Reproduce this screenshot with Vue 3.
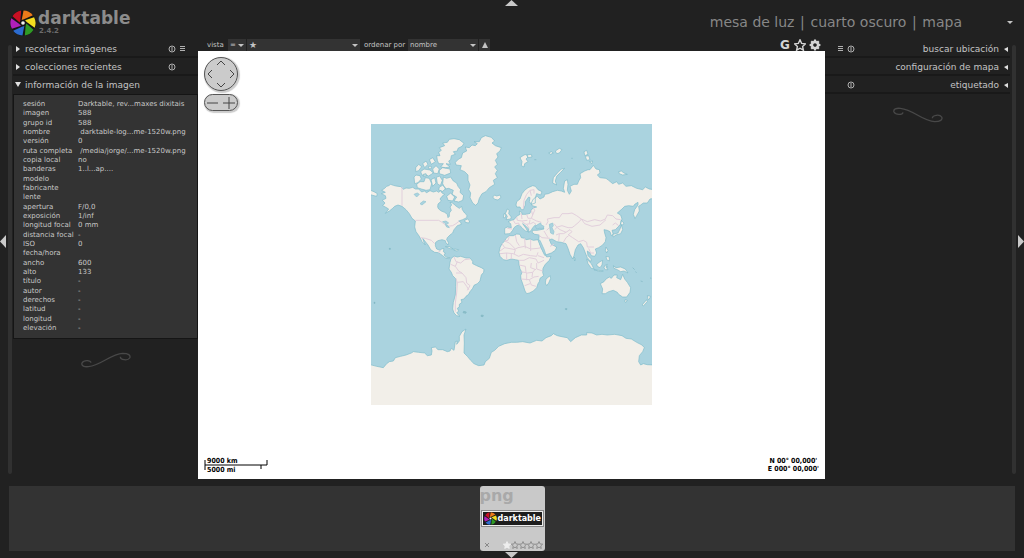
<script setup>
import { ref } from 'vue'

const wedges = ['#ee7a1a', '#f4de20', '#2f9a25', '#2c6cd0', '#b020ba', '#c81024']
const wedge = 'M-5 -12 2 -48A48 48 0 0 1 38 -30L4 -14Z'

const leftModules = [
  { title: 'recolectar imágenes', reset: true, presets: true, open: false },
  { title: 'colecciones recientes', reset: true, presets: false, open: false },
  { title: 'información de la imagen', reset: false, presets: false, open: true }
]
const rightModules = [
  { title: 'buscar ubicación', reset: true, presets: true },
  { title: 'configuración de mapa', reset: false, presets: false },
  { title: 'etiquetado', reset: true, presets: false }
]
const info = [
  ['sesión', 'Darktable, rev...maxes dixitais'],
  ['imagen', '588'],
  ['grupo id', '588'],
  ['nombre', '\u00a0darktable-log...me-1520w.png'],
  ['versión', '0'],
  ['ruta completa', '\u00a0/media/jorge/...me-1520w.png'],
  ['copia local', 'no'],
  ['banderas', '1..l...ap....'],
  ['modelo', ''],
  ['fabricante', ''],
  ['lente', ''],
  ['apertura', 'F/0,0'],
  ['exposición', '1/inf'],
  ['longitud focal', '0 mm'],
  ['distancia focal', '-'],
  ['ISO', '0'],
  ['fecha/hora', ''],
  ['ancho', '600'],
  ['alto', '133'],
  ['título', '-'],
  ['autor', '-'],
  ['derechos', '-'],
  ['latitud', '-'],
  ['longitud', '-'],
  ['elevación', '-']
]
const compare = ref('=')
const rating = ref('★')
const order = ref('nombre')

const star = 'M6 .8 7.6 4.4 11.5 4.8 8.6 7.4 9.4 11.2 6 9.2 2.6 11.2 3.4 7.4 .5 4.8 4.4 4.4Z'

const land = [
  // North America
  'M35 202 44 196 50 190 56 188 62 184 70 187 78 189 92 191 100 199 108 195 118 196 128 193 136 198 146 198 155 207 163 204 170 209 180 203 190 207 200 204 206 208 212 203 216 210 224 214 216 220 210 228 214 234 204 243 203 252 206 258 214 264 224 268 232 274 234 284 238 280 238 270 244 262 240 252 245 246 240 238 248 240 254 246 262 252 268 256 275 250 277 260 284 270 291 277 290 284 278 290 266 294 272 298 274 304 262 308 252 320 248 330 240 336 232 344 230 350 235 358 234 366 228 360 226 353 216 350 204 353 197 358 196 368 200 378 210 382 216 377 222 377 220 386 226 390 222 396 230 403 240 404 238 407 228 406 218 398 206 389 194 388 182 380 174 366 158 346 162 358 166 366 156 356 148 340 138 326 134 312 136 294 126 286 118 272 108 260 96 250 84 246 74 250 68 256 58 264 46 271 56 258 46 252 38 248 45 240 37 232 48 226 46 218 34 212 46 208Z',
  'M284 292 292 288 299 294 296 300 286 298Z',
  'M-3 200 12 206 22 212 20 220 12 218 -3 214Z',
  // Greenland
  'M256 118 266 108 274 104 278 90 290 84 286 72 298 74 306 66 316 68 322 62 312 56 328 56 334 44 346 38 364 43 374 54 366 60 376 68 394 74 390 84 380 92 384 102 376 112 382 124 374 132 382 142 376 152 382 164 370 172 374 184 358 194 348 206 336 212 328 226 324 240 317 247 308 240 300 224 302 210 296 200 300 186 294 172 294 156 284 146 270 140 274 128 258 126Z',
  'M368 222 374 216 380 219 390 216 393 223 384 231 374 229Z',
  // Arctic archipelago
  'M202 112 200 98 210 98 206 88 214 82 208 74 224 68 218 60 232 58 238 49 252 47 268 50 282 61 276 70 264 76 262 84 250 86 256 94 244 98 242 110 236 114 241 124 228 122 240 132 226 134 212 132 220 122 206 122Z',
  'M208 142 218 134 240 138 242 150 224 157 208 152Z',
  'M220 162 230 166 242 162 250 174 260 180 264 190 272 200 270 208 281 218 278 232 266 237 252 234 260 222 246 214 250 202 236 196 226 198 218 182Z',
  'M140 184 150 176 162 176 166 164 178 166 185 182 180 200 168 202 154 198 142 194Z',
  'M132 162 138 156 150 158 154 168 144 179 134 182Z',
  'M152 146 162 138 180 141 190 150 176 159 166 155 156 157Z',
  'M137 134 146 124 155 131 146 143 137 146Z',
  'M158 122 168 114 174 124 164 134Z',
  'M178 110 188 104 196 116 184 124Z',
  'M188 138 198 128 208 138 203 152 191 150Z',
  'M183 170 194 164 198 180 188 190Z',
  'M199 163 209 159 217 172 211 188 202 182Z',
  'M208 192 218 187 228 196 218 205 206 201Z',
  'M230 220 242 210 254 222 248 234 234 232Z',
  'M176 130 184 130 184 137 176 137Z M160 154 168 152 170 158 160 160Z',
  // Caribbean
  'M226 371 238 371 250 378 240 377Z',
  'M253 378 266 380 262 384 252 382Z',
  // South America
  'M240 418 243 407 252 399 262 402 272 400 288 405 300 405 308 415 308 422 320 428 334 434 342 439 341 448 334 456 330 474 322 482 312 487 308 496 300 506 296 514 288 520 282 528 273 530 276 538 268 544 268 552 262 556 266 564 260 570 270 580 260 578 252 570 248 558 250 538 256 516 257 490 258 468 248 458 244 448 237 438Z',
  // Africa
  'M387 388 390 374 396 362 404 354 408 346 418 338 430 338 440 333 450 334 454 344 464 346 468 350 480 348 490 352 504 350 508 360 514 374 521 386 530 402 543 400 538 412 526 424 519 436 518 448 521 458 510 466 508 476 504 482 500 494 490 504 478 510 470 512 465 504 460 488 453 468 452 458 456 448 450 438 447 424 446 412 436 410 424 408 410 412 400 410 390 400Z',
  'M540 458 542 466 536 480 530 488 526 480 528 468 536 462Z',
  // Eurasia
  'M404 333 404 316 412 312 424 314 422 302 414 296 424 292 432 290 440 280 450 274 448 264 455 268 456 274 468 274 480 271 484 260 492 254 500 252 486 248 484 240 490 228 502 220 510 228 522 222 524 214 535 212 548 206 562 202 574 204 584 208 580 196 584 174 592 170 594 184 592 202 598 214 604 204 600 190 612 184 622 184 626 174 632 164 630 152 644 144 654 140 660 140 670 127 678 138 688 140 690 150 682 156 690 164 708 166 716 172 728 182 740 176 746 184 758 180 768 190 784 188 800 196 818 200 826 192 838 198 852 200 852 226 840 228 832 240 820 240 812 246 806 250 808 264 800 278 795 287 790 274 794 260 804 246 804 238 794 244 790 250 776 248 764 250 756 258 742 270 752 276 756 288 750 306 736 320 726 322 730 334 724 338 720 326 712 322 702 320 704 330 708 344 706 356 698 366 686 374 676 378 680 390 674 400 664 398 660 390 652 384 654 398 664 408 662 416 652 404 646 390 640 374 632 362 624 366 616 380 612 398 608 408 600 394 594 376 588 362 574 358 560 356 546 348 538 350 544 364 560 372 556 382 544 390 524 397 518 384 510 364 506 350 508 336 494 334 486 328 488 322 502 322 522 318 516 308 506 312 496 306 488 314 484 322 476 328 476 318 464 306 458 302 468 316 474 326 466 324 456 314 448 306 440 308 432 314 428 322 420 332Z',
  // Scandinavia
  'M438 246 440 236 450 228 456 212 464 202 474 194 488 188 496 190 504 200 516 206 512 216 500 212 496 224 496 240 484 244 478 236 480 224 476 222 466 236 466 246 460 260 454 260 450 252 440 252Z',
  'M412 258 418 262 416 272 424 282 422 288 408 290 412 280 406 272Z',
  'M402 272 408 274 406 284 400 284Z',
  // Arctic islands of Eurasia
  'M548 180 550 164 562 150 574 138 584 136 572 148 560 160 556 174 560 186Z',
  'M450 104 462 96 470 94 474 102 468 108 474 116 464 122 462 132 454 128 456 116Z',
  'M470 96 484 94 486 102 474 104Z',
  'M642 86 650 82 654 94 644 98Z',
  'M646 100 656 98 660 110 650 112Z',
  'M658 116 668 114 666 122Z',
  'M746 146 754 144 762 150 772 154 758 156 748 152Z',
  'M536 90 544 86 550 90 542 94Z M556 84 568 76 576 80 568 90 560 92Z',
  // Japan, Philippines, Ceylon
  'M753 292 762 300 758 306 752 304Z',
  'M754 306 758 320 752 332 738 336 730 342 728 334 744 330 750 318Z',
  'M708 372 714 382 710 390 706 382Z M708 400 718 402 718 414 710 410Z',
  'M612 402 617 408 614 414Z',
  // Indonesia and New Guinea
  'M650 408 664 422 672 438 664 436 654 422Z',
  'M672 440 686 442 700 444 690 446Z',
  'M680 424 690 416 698 412 696 426 690 434 682 430Z',
  'M704 428 712 424 708 432 714 440 706 440 702 434Z',
  'M730 428 738 434 752 432 766 438 774 450 762 444 752 446 742 440 732 436Z',
  // Australia and New Zealand
  'M691 482 702 476 708 468 718 462 724 466 732 456 742 456 740 464 752 470 758 454 764 468 772 478 782 494 780 508 770 522 758 522 746 514 742 508 730 502 716 506 706 512 696 512 698 498Z',
  'M765 530 772 532 768 538 764 536Z',
  'M832 518 842 520 838 528 834 530Z M830 530 832 536 820 549 816 546Z',
  // Antarctica
  'M-3 724 20 730 40 734 50 722 58 716 70 714 76 704 92 700 108 696 124 690 130 686 146 688 164 690 172 698 184 696 186 684 184 674 196 672 204 680 218 680 232 686 240 684 244 676 252 682 256 656 262 654 260 664 268 654 268 640 276 626 288 618 282 636 283 660 282 690 292 700 302 712 312 722 326 728 342 726 346 716 358 706 364 688 374 682 386 670 404 662 424 658 440 658 458 656 480 660 500 652 516 654 528 644 544 638 550 632 562 638 580 642 592 644 602 656 616 644 634 636 650 636 650 629 666 630 680 636 696 634 712 636 734 634 756 638 768 646 784 648 800 658 816 666 823 674 818 686 808 698 806 716 812 726 820 722 832 725 852 726V852H-3Z'
].join(' ')

const water = [
  'M496 310 504 304 512 300 514 306 522 310 520 316 508 316 500 318Z',
  'M538 304 548 300 550 308 546 314 552 326 550 334 542 330 540 318Z',
  'M218 296 228 294 236 300 230 304Z M226 304 234 308 238 314 230 312Z',
  'M132 214 142 210 148 214 140 222Z M150 242 160 234 168 236 156 246Z',
  'M504 350 510 352 522 378 528 396 522 392 512 372Z'
].join(' ')

const borders = [
  'M96 192V248 M136 292H206L216 298 232 310 248 308 258 302 268 294',
  'M152 344 166 346 184 352 194 362 M204 388 212 384',
  'M258 466 262 480 260 510 256 540 256 566 M252 402 258 416 272 420 284 410 300 408 M262 416 256 430 266 444 276 450 288 464 290 480 300 488 292 502 M242 424 256 430 M262 478 280 476 290 490 296 500 M258 450 276 450',
  'M404 354 418 360 436 378 444 374 464 370 482 378 504 376 514 374 M418 340 414 352 404 354 M436 336 440 356 448 368 M464 346 466 376 M482 350V384 M396 362 404 374 390 384 M404 374 436 380 432 394 M410 390V410 M390 392 410 390 430 392 446 400 M424 392V408 M446 400 460 394 482 398 500 400 504 388 M446 412 462 412 478 404 498 408 504 420 522 412 M504 398 522 404 M500 420V438 M448 426 466 430 468 448 M454 446 472 450 488 448 496 438 M470 450V472 M454 468 478 470 492 462 506 460 M478 470 484 486 498 490 M488 448 486 462 M464 488 480 482 M500 438 518 444 M484 420 482 434 498 440',
  'M412 316 426 318 M430 292 436 302 446 300 448 308 M440 282 442 292 456 294 472 292 M454 272 456 288 M470 274 474 286 484 286 M456 296 468 304 482 302 490 298 498 304 M470 304 478 316 M484 262 488 276 484 286 500 294 514 298 M480 290 478 302 M488 276 494 262 490 254',
  'M528 306 534 296 532 288 552 284 568 284 576 272 594 272 606 270 620 278 634 288 628 296 614 308 606 314 594 314 576 308 562 312 554 320 M634 288 652 296 674 290 692 294 706 288 712 276 728 278 738 288 752 290 M634 288 644 302 666 310 690 306 708 290 M552 302 562 314 570 320 588 328 600 320 606 326 594 336 M558 336 568 332 580 332 588 328 M568 332 566 354 M538 314 530 322 M506 336 516 344 540 346 M596 336 608 344 626 356 640 352 650 358 652 372 660 372 672 372 M580 358 588 344 596 338 M540 370 552 364 M728 306 736 300 746 308 M522 324 534 344 M656 376 662 390 672 390',
  'M460 256 462 232 470 214 480 202 492 200 492 212 M480 202 484 218'
].join(' ')

const islets = 'M58 376h3v3h-3Z M12 538h3v3h-3Z M281 565l8 2-2 4-8-2Z M334 576l6 1-1 4-6-1Z M586 557l5 0-1 3-4-1Z M812 474l6 2 M840 465l4 1 M604 106h4 M493 110h6 M710 430l4 3 M788 434l6 6 M796 446l4 3'
</script>

<template>
  <div class="app">
    <header class="top">
      <svg class="logo" viewBox="-50 -50 100 100" aria-hidden="true">
        <circle r="49" fill="#151515" />
        <path v-for="(c, i) in wedges" :key="c" :fill="c" :transform="`rotate(${i * 60})`" :d="wedge" />
        <circle r="7" fill="#f2f2f2" />
      </svg>
      <div class="brand">
        <h1>darktable</h1>
        <span>2.4.2</span>
      </div>
      <nav class="views">
        <a href="#luz">mesa de luz</a><i>|</i><a href="#oscuro">cuarto oscuro</a><i>|</i><a href="#mapa">mapa</a>
      </nav>
      <button class="more" aria-label="más vistas">
        <svg viewBox="0 0 6 3"><path d="M0 0H6L3 3Z" /></svg>
      </button>
    </header>

    <main class="work">
      <aside class="side left">
        <div class="rail"></div>
        <div class="modules">
          <section v-for="m in leftModules" :key="m.title" class="module" :class="{ open: m.open }">
            <h2>
              <svg class="arrow" viewBox="0 0 6 6"><path :d="m.open ? 'M0 0H6L3 5Z' : 'M1 0 5 3 1 6Z'" /></svg>
              <span>{{ m.title }}</span>
              <button v-if="m.reset" aria-label="restablecer">
                <svg viewBox="0 0 8 8"><circle cx="4" cy="4" r="3" /><path d="M4 2V6" /></svg>
              </button>
              <button v-if="m.reset" aria-label="preajustes" :class="{ hidden: !m.presets }">
                <svg viewBox="0 0 8 8"><path d="M2 1.5H7M2 3.5H7M2 5.5H7" /></svg>
              </button>
            </h2>
          </section>
          <dl class="info">
            <div v-for="[k, v] in info" :key="k">
              <dt>{{ k }}</dt>
              <dd>{{ v }}</dd>
            </div>
          </dl>
          <svg class="flourish" viewBox="0 0 150 48">
            <path d="M30 32C28 23 8 24 3 33 0 42 10 45 22 44 62 40 88 6 125 4 142 4 150 10 146 18 140 27 118 24 118 14" />
          </svg>
        </div>
      </aside>

      <section class="center">
        <div class="toolbar">
          <label for="cmp">vista</label>
          <span class="pick cmp">
            <select id="cmp" v-model="compare"><option>=</option></select>
            <svg viewBox="0 0 6 3"><path d="M0 0H6L3 3Z" /></svg>
          </span>
          <span class="pick stars">
            <select v-model="rating" aria-label="valoración"><option>★</option></select>
            <svg viewBox="0 0 6 3"><path d="M0 0H6L3 3Z" /></svg>
          </span>
          <label for="ord" class="by">ordenar por</label>
          <span class="pick ord">
            <select id="ord" v-model="order"><option>nombre</option></select>
            <svg viewBox="0 0 6 3"><path d="M0 0H6L3 3Z" /></svg>
          </span>
          <button class="dir" aria-label="invertir orden">
            <svg viewBox="0 0 6 6"><path d="M3 0 6 6H0Z" /></svg>
          </button>
          <div class="tools">
            <button>G</button>
            <button aria-label="superposiciones">
              <svg viewBox="0 0 12 12"><path class="outline" :d="star" /></svg>
            </button>
            <button aria-label="preferencias">
              <svg viewBox="-6 -6 12 12">
                <circle r="3" class="ring" />
                <path v-for="n in 8" :key="n" :transform="`rotate(${n * 45})`" d="M-1.4 -3.5 -1 -5.4H1L1.4 -3.5Z" />
              </svg>
            </button>
          </div>
        </div>

        <div class="map">
          <svg class="world" viewBox="3 3 843 843" role="img" aria-label="mapa del mundo">
            <rect x="3" y="3" width="843" height="843" fill="#aad3df" />
            <path class="land" :d="land" />
            <path class="borders" :d="borders" />
            <path class="water" :d="water" />
            <path class="islets" :d="islets" />
          </svg>

          <div class="controls">
            <div class="pan">
              <button aria-label="norte"><svg viewBox="0 0 8 8"><path d="M0 6 4 2 8 6" /></svg></button>
              <div>
                <button aria-label="oeste"><svg viewBox="0 0 8 8"><path d="M6 0 2 4 6 8" /></svg></button>
                <button aria-label="este"><svg viewBox="0 0 8 8"><path d="M2 0 6 4 2 8" /></svg></button>
              </div>
              <button aria-label="sur"><svg viewBox="0 0 8 8"><path d="M0 2 4 6 8 2" /></svg></button>
            </div>
            <div class="zoom">
              <button aria-label="alejar"><svg viewBox="0 0 12 12"><path d="M0 6H11" /></svg></button>
              <button aria-label="acercar"><svg viewBox="0 0 12 12"><path d="M0 6H12M6 0V12" /></svg></button>
            </div>
          </div>

          <svg class="scale" viewBox="0 0 66 18">
            <path d="M1 3V13M1 8H63V3M57 8V12" />
            <text x="3" y="6">9000 km</text>
            <text x="3" y="15">5000 mi</text>
          </svg>
          <p class="coords">N 00° 00,000'<br />E 000° 00,000'</p>
        </div>
      </section>

      <aside class="side right">
        <div class="modules">
          <section v-for="m in rightModules" :key="m.title" class="module">
            <h2>
              <button v-if="m.reset" aria-label="preajustes" :class="{ hidden: !m.presets }">
                <svg viewBox="0 0 8 8"><path d="M1 1.5H6M1 3.5H6M1 5.5H6" /></svg>
              </button>
              <button v-if="m.reset" aria-label="restablecer">
                <svg viewBox="0 0 8 8"><circle cx="4" cy="4" r="3" /><path d="M4 2V6" /></svg>
              </button>
              <span>{{ m.title }}</span>
              <svg class="arrow" viewBox="0 0 6 6"><path d="M5 1 1 3 5 6Z" /></svg>
            </h2>
          </section>
          <svg class="flourish" viewBox="0 0 150 48">
            <path d="M30 16C28 25 8 24 3 15 0 6 10 3 22 4 62 8 88 42 125 44 142 44 150 38 146 30 140 21 118 24 118 34" />
          </svg>
        </div>
        <div class="rail"></div>
      </aside>
    </main>

    <footer class="film">
      <figure class="thumb">
        <b class="ext">png</b>
        <div class="pic">
          <svg viewBox="-50 -50 100 100" aria-hidden="true">
            <path v-for="(c, i) in wedges" :key="c" :fill="c" :transform="`rotate(${i * 60})`" :d="wedge" />
            <circle r="8" fill="#f2f2f2" />
          </svg>
          <b>darktable</b>
        </div>
        <figcaption>
          <svg class="reject" viewBox="0 0 6 6"><path d="M1 1 5 5M5 1 1 5" /></svg>
          <svg v-for="n in 5" :key="n" class="star" :class="{ on: n === 1 }" viewBox="0 0 12 12"><path :d="star" /></svg>
        </figcaption>
      </figure>
    </footer>

    <button class="edge north" aria-label="panel superior"><svg viewBox="0 0 13 6"><path d="M6.5 0 13 6H0Z" /></svg></button>
    <button class="edge south" aria-label="panel inferior"><svg viewBox="0 0 13 6"><path d="M0 0H13L6.5 6Z" /></svg></button>
    <button class="edge west" aria-label="panel izquierdo"><svg viewBox="0 0 6 13"><path d="M6 0V13L0 6.5Z" /></svg></button>
    <button class="edge east" aria-label="panel derecho"><svg viewBox="0 0 6 13"><path d="M0 0 6 6.5 0 13Z" /></svg></button>
  </div>
</template>

<style>
body {
  background: #212121;
}
</style>

<style scoped>
.app {
  position: relative;
  display: flex;
  flex-direction: column;
  box-sizing: border-box;
  min-height: 100vh;
  padding-bottom: 7px;
  background: #212121;
  color: #c4c4c4;
  font-family: "DejaVu Sans", sans-serif;
  font-size: 7px;
}
.app *,
.app *::before {
  box-sizing: border-box;
}
button,
select {
  margin: 0;
  padding: 0;
  border: 0;
  background: none;
  color: inherit;
  font: inherit;
}
button {
  display: flex;
  align-items: center;
  justify-content: center;
}
svg {
  display: block;
  fill: currentColor;
}

/* header */
.top {
  display: flex;
  align-items: flex-start;
  height: 38px;
  padding: 10px 11px 0 10px;
}
.logo {
  width: 26px;
  height: 26px;
}
.brand {
  margin-left: 2px;
  color: #8c8c8c;
}
.brand h1 {
  margin: 0;
  font-size: 17px;
  line-height: 17px;
}
.brand span {
  display: block;
  padding-left: 1px;
  color: #6c6c6c;
  font-weight: bold;
  line-height: 8px;
}
.views {
  display: flex;
  margin-left: auto;
  padding-top: 3px;
  color: #878787;
  font-size: 14px;
  line-height: 18px;
}
.views a {
  color: inherit;
  text-decoration: none;
}
.views i {
  width: 16px;
  font-style: normal;
  text-align: center;
}
.more {
  width: 6px;
  height: 24px;
  margin-left: 45px;
}
.more svg {
  width: 6px;
  height: 3px;
}

/* work area */
.work {
  flex: 1;
  display: grid;
  grid-template-columns: 198px minmax(0, 1fr) 199px;
}
.side {
  display: flex;
  padding-top: 2px;
}
.rail {
  width: 4px;
  margin: 5px 0;
  border-radius: 2px;
  background: #313131;
}
.left .rail {
  margin-left: 8px;
}
.right .rail {
  margin-right: 8px;
}
.modules {
  flex: 1;
  min-width: 0;
}
.left .modules {
  padding-left: 1px;
}
.right .modules {
  padding-right: 2px;
}
.module h2 {
  display: flex;
  align-items: center;
  height: 18px;
  margin: 0;
  padding-top: 2px;
  border-bottom: 2px solid #191919;
  font-size: 9px;
  font-weight: normal;
  line-height: 14px;
}
.module.open h2 {
  border-color: transparent;
}
.left h2 {
  padding-left: 2px;
  padding-right: 12px;
}
.left h2 span {
  flex: 1;
  padding-left: 4px;
}
.right h2 {
  padding-left: 12px;
  padding-right: 1px;
}
.right h2 span {
  flex: 1;
  padding-right: 4px;
  text-align: right;
}
.arrow {
  width: 6px;
  height: 6px;
  color: #e0e0e0;
}
h2 button {
  width: 8px;
  height: 8px;
}
h2 button + button {
  margin-left: 2px;
}
h2 button svg {
  width: 8px;
  height: 8px;
  fill: none;
  stroke: #b0b0b0;
}
.hidden {
  visibility: hidden;
}
.info {
  display: flex;
  flex-direction: column;
  justify-content: space-between;
  min-height: 245px;
  margin: 0;
  padding: 5px 0 5px 9px;
  border: 1px solid #151515;
  background: #333;
  color: #c8c8c8;
}
.info div {
  display: flex;
  height: 9px;
  line-height: 9px;
  white-space: nowrap;
}
.info dt {
  width: 55px;
}
.info dd {
  margin: 0;
}
.flourish {
  width: 50px;
  height: 16px;
  margin: 13px auto 0;
  fill: none;
  stroke: #484848;
  stroke-width: 4;
}

/* toolbar */
.center {
  display: flex;
  flex-direction: column;
}
.toolbar {
  display: flex;
  align-items: center;
  height: 13px;
  padding: 1px 4px 0 9px;
}
.toolbar label {
  width: 21px;
}
.toolbar .by {
  width: 44px;
  margin-left: 3px;
  white-space: nowrap;
}
.pick {
  position: relative;
  height: 12px;
  margin-right: 1px;
  background: #333;
}
.pick select {
  width: 100%;
  height: 12px;
  padding-left: 2px;
  appearance: none;
}
.pick svg {
  position: absolute;
  top: 5px;
  right: 2px;
  width: 6px;
  height: 3px;
  pointer-events: none;
}
.cmp {
  width: 18px;
}
.stars {
  width: 113px;
}
.stars select {
  font-size: 9px;
}
.ord {
  width: 70px;
}
.dir {
  width: 11px;
  height: 12px;
  background: #333;
}
.dir svg {
  width: 6px;
  height: 6px;
}
.tools {
  display: flex;
  gap: 3px;
  margin-left: auto;
  color: #d4d4d4;
}
.tools button {
  width: 12px;
  height: 12px;
  font: bold 12px/12px "DejaVu Sans", sans-serif;
}
.tools svg {
  width: 12px;
  height: 12px;
}
.outline {
  fill: none;
  stroke: currentColor;
  stroke-width: 1.4;
}
.ring {
  fill: none;
  stroke: currentColor;
  stroke-width: 2.4;
}

/* map */
.map {
  position: relative;
  flex: 1;
  display: flex;
  align-items: center;
  justify-content: center;
  padding-bottom: 1px;
  background: #fff;
}
.world {
  width: 281px;
  height: 281px;
}
.land {
  fill: #f2efe9;
  stroke: #7dbbca;
  stroke-width: 2;
  stroke-linejoin: round;
}
.water {
  fill: #aad3df;
  stroke: #8fc4d1;
  stroke-width: 2;
}
.borders {
  fill: none;
  stroke: #e2cfdc;
  stroke-width: 3;
}
.islets {
  fill: #8fc0c8;
  stroke: #7fb5c2;
  stroke-width: 2;
}
.controls {
  position: absolute;
  top: 6px;
  left: 6px;
  display: grid;
  gap: 3px;
}
.pan,
.zoom {
  border: 1px solid #555;
  background: #cbcbcb;
  box-shadow: 1px 1px 1px 1px #ccc;
}
.pan {
  display: flex;
  flex-direction: column;
  align-items: center;
  justify-content: space-between;
  width: 34px;
  height: 34px;
  padding: 1px;
  border-radius: 50%;
}
.pan div {
  display: flex;
  justify-content: space-between;
  width: 100%;
}
.controls svg {
  width: 8px;
  height: 8px;
  fill: none;
  stroke: #444;
}
.zoom {
  display: flex;
  justify-content: space-between;
  width: 34px;
  height: 17px;
  padding: 0 2px;
  border-radius: 9px;
}
.zoom svg {
  width: 12px;
  height: 12px;
}
.scale {
  position: absolute;
  bottom: 4px;
  left: 6px;
  width: 66px;
  height: 18px;
  fill: #000;
  font-family: "DejaVu Sans Condensed", "DejaVu Sans", sans-serif;
  font-weight: bold;
}
.scale path {
  fill: none;
  stroke: #000;
}
.coords {
  position: absolute;
  right: 6px;
  bottom: 6px;
  margin: 0;
  color: #000;
  font-family: "DejaVu Sans Condensed", "DejaVu Sans", sans-serif;
  font-weight: bold;
  line-height: 8px;
  text-align: center;
}

/* filmstrip */
.film {
  display: flex;
  justify-content: center;
  margin: 7px 9px 0;
  background: #333;
}
.thumb {
  display: flex;
  flex-direction: column;
  width: 65px;
  height: 65px;
  margin: 0;
  border-radius: 3px;
  background: #c9c9c9;
}
.ext {
  height: 24px;
  color: #a9a9a9;
  font-size: 16px;
  line-height: 19px;
}
.pic {
  display: flex;
  align-items: center;
  gap: 1px;
  height: 17px;
  margin: 0 1px;
  border: 1px solid #888;
  outline: 1px solid #eee;
  outline-offset: -2px;
  background: #1d1d1d;
  color: #fff;
  font-size: 8px;
  overflow: hidden;
}
.pic svg {
  flex: none;
  width: 13px;
  height: 13px;
  margin-left: 2px;
}
.thumb figcaption {
  display: flex;
  align-items: center;
  margin-top: auto;
  padding: 0 2px 2px 4px;
}
.reject {
  width: 6px;
  height: 6px;
  margin-right: auto;
  stroke: #888;
}
.star {
  width: 8px;
  height: 8px;
  fill: none;
  stroke: #8a8a8a;
  stroke-width: 1.4;
}
.star.on {
  fill: #eee;
  stroke: #eee;
}

/* panel toggles over the window edges */
.edge {
  position: absolute;
  color: #c9c9c9;
}
.north,
.south {
  left: calc(50% - 7px);
}
.north {
  top: 0;
}
.south {
  bottom: 0;
}
.north svg,
.south svg {
  width: 13px;
  height: 6px;
}
.west,
.east {
  top: calc(50% - 44px);
}
.west {
  left: 0;
}
.east {
  right: 0;
}
.west svg,
.east svg {
  width: 6px;
  height: 13px;
}
</style>
